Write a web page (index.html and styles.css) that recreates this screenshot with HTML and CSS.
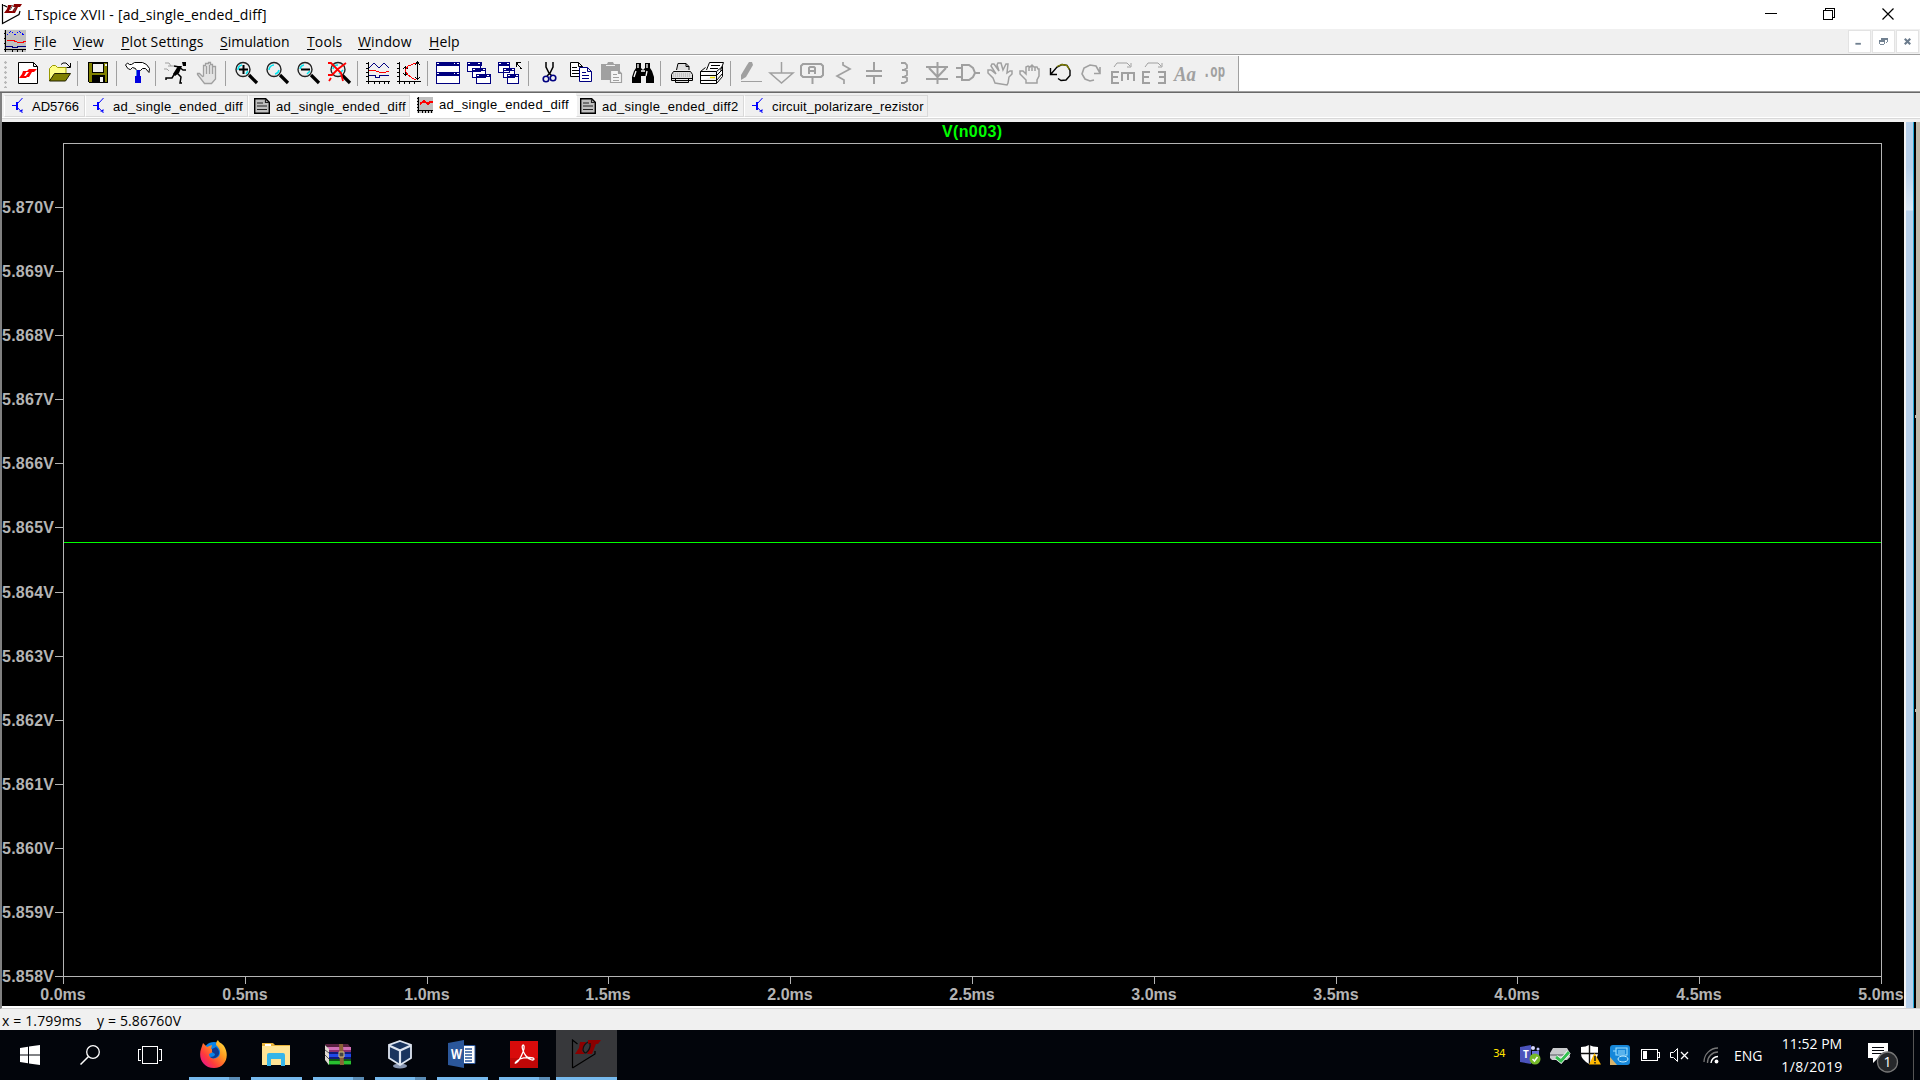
FILE: index.html
```html
<!DOCTYPE html>
<html lang="en">
<head>
<meta charset="utf-8">
<title>LTspice XVII - [ad_single_ended_diff]</title>
<link rel="stylesheet" href="styles.css">
</head>
<body>
<div class="screen">
<header class="titlebar">
  <svg class="app-icon" width="24" height="26" viewBox="0 0 24 26"><path d="M2.500 4V23.500L19 14.500 20 11M2.500 4.500L7 7" fill="none" stroke="#000" stroke-width="1.200"/><path d="M8 5h4l-3 6h3v2H4l3-4zM14 4h8l-2 3h-2l-3 6h-4l4-6h-2z" fill="#8b0000"/><path d="M10 10l3-5M14 11l2-4" stroke="#555"/></svg>
  <span class="title-text">LTspice XVII - [ad_single_ended_diff]</span>
  <svg class="win-controls" width="160" height="29" viewBox="1760 0 160 29" shape-rendering="crispEdges"><path d="M1765 13.500h12M1823.500 10.500h9v9h-9zM1825.500 10v-1.500h9v9h-1.500" fill="none" stroke="#000"/><path d="M1882.500 8.500l11 11M1893.500 8.500l-11 11" stroke="#000" stroke-width="1.200" shape-rendering="auto"/></svg>
</header>
<nav class="menubar">
  <svg class="doc-icon" width="22" height="22" viewBox="0 0 22 22" shape-rendering="crispEdges"><path fill="#c0c0c0" d="M0 0h22v22H0z"/><path d="M1.500 0v22M0 3.500h1M0 8.500h1M0 13.500h1M0 19.500h22M8.500 19v3M13.500 19v3M18.500 19v3" stroke="#000" fill="none"/><path d="M2 16.500h6v1h5v-1h9" stroke="#000080" fill="none"/><path d="M3 5l4-4 4 4 4-4 6 5" stroke="#00f" stroke-dasharray="2 1.500" fill="none"/><path d="M3 11l5-1 5 2 4 1 5-2" stroke="#f00" fill="none"/></svg>
  <span class="m-file"><u>F</u>ile</span><span class="m-view"><u>V</u>iew</span><span class="m-plot"><u>P</u>lot Settings</span><span class="m-sim"><u>S</u>imulation</span><span class="m-tools"><u>T</u>ools</span><span class="m-win"><u>W</u>indow</span><span class="m-help"><u>H</u>elp</span>
  <div class="mdi-controls">
    <svg width="23" height="23" viewBox="0 0 23 23"><path fill="#708090" d="M7 13h6v2H7z"/></svg>
    <svg width="23" height="23" viewBox="0 0 23 23" shape-rendering="crispEdges"><path d="M9 10V8.500h6.500v4H14M7.500 11.500h5v3h-5z" fill="none" stroke="#708090"/><path d="M9 8h7v2H9zM7 10h6v2H7z" fill="#708090"/></svg>
    <svg width="23" height="23" viewBox="0 0 23 23"><path d="M8.500 8.500l6 6M14.500 8.500l-6 6" stroke="#6b7b8c" stroke-width="2.300"/></svg>
  </div>
</nav>
<div class="toolrow">
<div class="toolbar">
  <i class="grip"></i>
  <svg viewBox="0 0 24 24"><path d="M2.500 1.500h15l4 4v17h-19zM17.500 1.500v4h4" fill="#fff" stroke="#000"/><path d="M7 10h4l-3 5h4l-2 2H3l3-4zM13 8h8l-3 3h-2l-3 5h-4l4-5h-3z" fill="#f00"/></svg>
  <svg viewBox="0 0 24 24"><path d="M2.500 20V7.500l3-3h3l2 2h8.500v6" fill="#ff8" stroke="#999900"/><path d="M7.500 12.500h16l-5 7.500h-16z" fill="#808000" stroke="#222200"/><path d="M14 3.500l2-1.500h3l4 4M23.500 2v4.500h-4" fill="none" stroke="#000"/></svg>
  <i class="sep"></i>
  <svg viewBox="0 0 24 24" shape-rendering="crispEdges"><path d="M2.500 1.500h19v20h-18l-1-1z" fill="#808000" stroke="#000"/><path d="M6.500 2.500h11v9h-11z" fill="#f0f0f0" stroke="#000"/><path fill="#000" d="M6 14h13v8H6z"/><path fill="#eee" d="M14 16h3v5h-3zM19 3h2v2h-2z"/></svg>
  <i class="sep"></i>
  <svg viewBox="0 0 24 24"><path d="M.5 4l2-2 2 1.500h2l3-2h8l4 2 3 4-.5 4-3.500-4h-3l-2 2h-4l-1-2-3-1-2 2-2-.5-1-1z" fill="#fff" stroke="#000"/><path d="M11 9h4v6h1v7h-6v-7h1z" fill="#0000e0"/><path d="M11.500 9v6" stroke="#4080e0"/></svg>
  <i class="sep"></i>
  <svg viewBox="0 0 24 24"><path d="M18 1h4v4h-3zM14 5h4l-3 7-4 3-2-2z" fill="#000"/><path d="M10 5l5 1 4 3h3M13 12l4 4-1 6h2M11 12l-3 5H2v2" fill="none" stroke="#000" stroke-width="1.500"/><path d="M1 2h4l2 3h3M0 8h3l2 2M4 5h3" fill="none" stroke="#a0a0a0"/></svg>
  <svg viewBox="0 0 24 24"><path d="M8.500 15V4.500h2V2.500h3V1.500h2v2h2v2h3V18l-4 4.500h-7l-7-9v-1h2l3 3zM11.500 5v8M14.500 4v9M17.500 6v7" fill="#e4e4e4" stroke="#a0a0a0" stroke-width="1.300"/></svg>
  <i class="sep"></i>
  <svg viewBox="0 0 24 24"><path d="M15 14l8 8" stroke="#000" stroke-width="3.200"/><circle cx="9" cy="8.500" r="7" fill="#eee" stroke="#222" stroke-width="1.400"/><path d="M4 9a5 5 0 014-5M12 13l2-3" stroke="#00e5f0" stroke-width="1.500" fill="none"/><path d="M5 8.500h9M9.500 4v9" stroke="#000" stroke-width="2"/></svg>
  <svg viewBox="0 0 24 24"><path d="M15 14l8 8" stroke="#000" stroke-width="3.200"/><circle cx="9" cy="8.500" r="7" fill="#eee" stroke="#222" stroke-width="1.400"/><path d="M4 9a5 5 0 015-5M10 13a5 5 0 004-4" stroke="#00e5f0" stroke-width="1.500" fill="none"/></svg>
  <svg viewBox="0 0 24 24"><path d="M15 14l8 8" stroke="#000" stroke-width="3.200"/><circle cx="9" cy="8.500" r="7" fill="#eee" stroke="#222" stroke-width="1.400"/><path d="M4 8a5 5 0 014-4M11 13l3-3" stroke="#00e5f0" stroke-width="1.500" fill="none"/><path d="M5 8.500h9" stroke="#000" stroke-width="2"/></svg>
  <svg viewBox="0 0 24 24"><path d="M15 14l8 8" stroke="#000" stroke-width="3.200"/><circle cx="11" cy="8.500" r="7" fill="#eee" stroke="#222" stroke-width="1.400"/><path d="M6 8a5 5 0 015-4M12 13l4-4" stroke="#00e5f0" stroke-width="1.500" fill="none"/><path d="M1 2h3l10 10 2 8M19 2l-8 6-6 6H1M4 17l-2 3" stroke="#f00" stroke-width="1.800" fill="none"/></svg>
  <i class="sep"></i>
  <svg viewBox="0 0 24 24" shape-rendering="crispEdges"><path d="M2.500 1v22M0 2.500h3M0 7.500h3M0 11.500h3M0 15.500h3M0 20.500h24M8.500 20v3M13.500 20v3M18.500 20v3M22.500 20v3" stroke="#000"/><path d="M3 7l5-5 5 5 5-5 5 5M3 14.500h6v2h4v-2h10" fill="none" stroke="#000080"/><path d="M3 10l4-1 6 2 4 1 6-2" fill="none" stroke="#f00"/></svg>
  <svg viewBox="0 0 24 24" shape-rendering="crispEdges"><path d="M2.500 1v22M0 2.500h3M0 7.500h3M0 11.500h3M0 15.500h3M0 20.500h24M7.500 20v3M12.500 20v3M17.500 20v3M8.500 6v8M6 8l2.500-2L11 8M6 12l2.500 2 2.500-2M20.500 2v16M18 4l2.500-3L23 4M18 16l2.500 2 2.500-2" stroke="#000" fill="none"/><path d="M19 2l-8 3-3 5 3 4 4 3 4 2" fill="none" stroke="#f00"/></svg>
  <i class="sep"></i>
  <svg viewBox="0 0 24 24" shape-rendering="crispEdges"><path d="M.5 1.500h23v10H.5zM.5 11.500h23v11H.5z" fill="#fff" stroke="#000080"/><path fill="#000080" d="M0 1h24v4H0zM0 11h24v4H0z"/><path fill="#fff" d="M1 2h2v1H1zM18 2h1v1h-1zM21 2h2v1h-2zM1 12h2v1H1zM18 12h1v1h-1zM21 12h2v1h-2z"/></svg>
  <svg viewBox="0 0 24 24" shape-rendering="crispEdges"><g fill="#fff" stroke="#000080"><path d="M.5 1.500h13v9H.5zM5.500 7.500h13v9h-13zM9.500 13.500h14v9h-14z"/></g><path fill="#000080" d="M0 1h15v4H0zM5 7h14v3H5zM9 13h15v3H9z"/><path fill="#fff" d="M1 2h2v1H1zM11 2h2v1h-2zM6 8h2v1H6zM16 8h2v1h-2zM10 14h2v1h-2zM20 14h2v1h-2z"/></svg>
  <svg viewBox="0 0 24 24" shape-rendering="crispEdges"><g fill="#fff" stroke="#000080"><path d="M.5 1.500h11v10H.5zM5.500 7.500h11v9h-11zM9.500 13.500h11v9h-11z"/></g><path fill="#000080" d="M0 1h12v4H0zM5 7h12v3H5zM9 13h12v3H9z"/><path fill="#fff" d="M1 2h2v1H1zM9 2h2v1H9zM6 8h2v1H6zM14 8h2v1h-2zM10 14h2v1h-2zM18 14h2v1h-2z"/><path d="M18.500 6V1.500H23M18.500 2l5 6" fill="none" stroke="#000"/></svg>
  <i class="sep"></i>
  <svg viewBox="0 0 24 24"><path d="M9 1v5l3 6 3 3M16 1v5l-3 6-3 3" fill="none" stroke="#000" stroke-width="1.500"/><circle cx="9" cy="18" r="2.800" fill="none" stroke="#000080" stroke-width="1.600"/><circle cx="16" cy="17" r="2.800" fill="none" stroke="#000080" stroke-width="1.600"/></svg>
  <svg viewBox="0 0 24 24"><path d="M2.500 1.500h8l4 4v10h-12zM10.500 1.500v4h4" fill="#fff" stroke="#000"/><path d="M4 6.500h5M4 9.500h7M4 12.500h7" stroke="#000"/><path d="M11.500 6.500h8l4 4v10h-12zM19.500 6.500v4h4" fill="#fff" stroke="#000080"/><path d="M14 11.500h4M14 14.500h7M14 17.500h7" stroke="#000080"/></svg>
  <svg viewBox="0 0 24 24"><path d="M2 3h6l1-2h5l1 2h6v16H2z" fill="#a0a0a0"/><path d="M7 4.500h9" stroke="#eee"/><path d="M11.500 9.500h8l3 3v9h-11zM19.500 9.500v3h3M14 13.500h4M14 16.500h6M14 19.500h6" fill="#f5f5f5" stroke="#a0a0a0" stroke-width="1.200"/></svg>
  <svg class="find" viewBox="0 0 24 24"><path d="M5 2h5v5l2 2 2-2V2h5v5l2 3 2 6v6h-8v-7h-5v7H1v-6l2-6 2-3z" fill="#000"/><path d="M7 3v4M5 10l-2 6M16 3v4M16 10l-1 5M10 10h4" stroke="#fff" stroke-width="1.300"/></svg>
  <i class="sep"></i>
  <svg viewBox="0 0 24 24"><path d="M7.500 9L9 2.500h8l3 3V9M17 2.500v3h3" fill="#ddd" stroke="#000"/><path d="M4.500 10.500h17l2 3v6h-21v-6zM2.500 17.500h21M6.500 17.500v4h13v-4" fill="#ddd" stroke="#000"/><path d="M4 13h18M4 15h18" stroke="#aaa" stroke-dasharray="1 1"/></svg>
  <svg viewBox="0 0 24 24"><path d="M6.500 9l3-7.500h14l-3 8M.5 10.500h16l6-5v10l-6 7H.5zM.5 10.500l5-4M16.500 10.500v12M.5 14.500h16l6-6M.5 19.500h16l6-7" fill="#fff" stroke="#000"/><path d="M11 4.500h9M10 7.500h8" stroke="#000"/><path d="M10 16.500h5" stroke="#f0e000" stroke-width="1.500"/></svg>
  <i class="sep"></i>
  <svg class="off" viewBox="0 0 24 24"><path fill="#a0a0a0" stroke="none" d="M10 1h3l1 3-7 12-5 3V14L8 4z"/><path d="M2 20.500h21"/></svg>
  <svg class="off" viewBox="0 0 24 24"><path d="M11.500 1v11M0 12h23L11.500 22z" stroke-width="1.500"/></svg>
  <svg class="off" viewBox="0 0 24 24"><path d="M2 3h18l2 2v9l-2 2H2l-2-2V5zM11.500 16v7M8 13V7l1-1h4l1 1v6M8 10h6" stroke-width="2"/></svg>
  <svg class="off" viewBox="0 0 24 24"><path d="M11 1v3l7 4-13 7 7 4v4" stroke-width="1.700"/></svg>
  <svg class="off" viewBox="0 0 24 24"><path d="M11 1v8M11 15v8M3 10h16M3 15h16" stroke-width="2"/></svg>
  <svg class="off" viewBox="0 0 24 24"><path d="M7 2h4l2 2v3l-3 2H8M10 9l3 1v4l-3 2H8M10 16l3 1v3l-3 2H7" stroke-width="1.800"/></svg>
  <svg class="off" viewBox="0 0 24 24"><path d="M12.500 1v22M1 6h22M4 7l8.500 9L21 7M1 18h22" stroke-width="2"/></svg>
  <svg class="off" viewBox="0 0 24 24"><path d="M0 7h6M0 16h6M5 4h8l4 3 2 5-2 4-4 3H5M6 4v15M19 12h5" stroke-width="2"/></svg>
  <svg class="off" viewBox="0 0 24 24"><path d="M8 22l-2-5-5-5V9h3l5 4-5-8 1-2h2l5 7-2-6 1-2h3l2 7 3-6h2l-1 9 3-2h2v3l-3 3-1 6-1 2z" stroke-width="1.500"/></svg>
  <svg class="off" viewBox="0 0 24 24"><path d="M8 22v-3l-6-6v-3h3l3 3V6l2-1 2 1 2-2 2 2h3l1 2h1v7l-2 4v3zM11 5v5M14 5v5M17 6v4" stroke-width="1.500"/></svg>
  <svg viewBox="0 0 24 24"><path d="M1.500 7v6.500H8M2 13l6-7 5-2.500 5 1 3 5v5l-4 4.500-5 .5-3-2" fill="none" stroke="#000" stroke-width="1.400"/><path d="M8 5.500l5-2 5 1 2.500 4" fill="none" stroke="#808000" stroke-width="1.300"/></svg>
  <svg class="off" viewBox="0 0 24 24"><path d="M20 6v6.500h-6M20 12l-4-7-6-1-6 3-2 6 3 5 5 2 4-1" stroke-width="1.600"/></svg>
  <svg class="off" viewBox="0 0 24 24"><path d="M8 11H1v11h7M1 16h6M11 20v-8h12v8M17 12v7" stroke-width="2"/><path d="M3 6l3-4h10l3 3M20 2v4h-4"/></svg>
  <svg class="off" viewBox="0 0 24 24"><path d="M8 11H1v11h7M1 16h6M16 11h7v11h-7M23 16h-6" stroke-width="2"/><path d="M3 6l3-4h10l3 3M20 2v4h-4"/></svg>
  <svg viewBox="0 0 24 24"><text x="1" y="20" class="t-aa" textLength="22" lengthAdjust="spacingAndGlyphs">Aa</text></svg>
  <svg viewBox="0 0 24 24"><text x="-1" y="16" class="t-op" textLength="22" lengthAdjust="spacingAndGlyphs">.op</text></svg>
</div>
</div>
<div class="tabs">
  <div class="tab t1"><svg viewBox="0 0 16 16"><use href="#bjt"/></svg><span class="plain">AD5766</span></div>
  <div class="tab t2"><svg viewBox="0 0 16 16"><use href="#bjt"/></svg><span>ad_single_ended_diff</span></div>
  <div class="tab t3"><svg viewBox="0 0 16 16"><use href="#doc"/></svg><span>ad_single_ended_diff</span></div>
  <div class="tab t4 active"><svg viewBox="0 0 16 16" shape-rendering="crispEdges"><path fill="#c0c0c0" d="M0 0h16v16H0z"/><path d="M1.500 0v16M0 1.500h2M0 4.500h2M0 7.500h2M0 10.500h2M0 13.500h16M5.500 13v3M8.500 13v3M11.500 13v3M14.500 13v3" stroke="#000"/><path d="M3 7l4-3 4 3 2-2h3" fill="none" stroke="#f00" stroke-width="2"/></svg><span>ad_single_ended_diff</span></div>
  <div class="tab t5"><svg viewBox="0 0 16 16"><use href="#doc"/></svg><span>ad_single_ended_diff2</span></div>
  <div class="tab t6"><svg viewBox="0 0 16 16"><use href="#bjt"/></svg><span>circuit_polarizare_rezistor</span></div>
  <svg class="defs" width="0" height="0"><defs>
    <g id="bjt" fill="none" stroke="#00f"><path d="M0 7.500h4M10.500 0L5 6M5 9l5.500 6"/><path d="M5 4v8" stroke-width="2"/><path d="M7 13.500h3.500V11z" fill="#00f" stroke="none"/></g>
    <g id="doc"><path d="M.7.700h11l3.600 3.600v11H.7z" fill="#c0c0c0" stroke="#000" stroke-width="1.400"/><path d="M11.500 1v3.500H15M3 5h6M3 8h10M3 11.500h10" stroke="#222" stroke-width="1.200" fill="none"/></g>
  </defs></svg>
</div>
<main class="workspace">
  <svg class="plot" id="plot" width="1902" height="884" viewBox="2 122 1902 884">
    <g shape-rendering="crispEdges" fill="none" stroke="#b4b4b4">
      <path d="M63.500 984V143.500H1881.500V984M55 976.500H1882"/>
      <path d="M55 207.500h8M55 271.500h8M55 335.500h8M55 399.500h8M55 463.500h8M55 527.500h8M55 592.500h8M55 656.500h8M55 720.500h8M55 784.500h8M55 848.500h8M55 912.500h8"/>
      <path d="M245.500 977v7M427.500 977v7M608.500 977v7M790.500 977v7M972.500 977v7M1154.500 977v7M1336.500 977v7M1517.500 977v7M1699.500 977v7"/>
      <path d="M64 542.500H1881" stroke="#0f0"/>
    </g>
    <text class="trace" x="972" y="137" text-anchor="middle" textLength="60">V(n003)</text>
    <g class="axis">
      <text x="2" y="213" textLength="52">5.870V</text><text x="2" y="277" textLength="52">5.869V</text><text x="2" y="341" textLength="52">5.868V</text><text x="2" y="405" textLength="52">5.867V</text><text x="2" y="469" textLength="52">5.866V</text><text x="2" y="533" textLength="52">5.865V</text><text x="2" y="598" textLength="52">5.864V</text><text x="2" y="662" textLength="52">5.863V</text><text x="2" y="726" textLength="52">5.862V</text><text x="2" y="790" textLength="52">5.861V</text><text x="2" y="854" textLength="52">5.860V</text><text x="2" y="918" textLength="52">5.859V</text><text x="2" y="982" textLength="52">5.858V</text>
    </g>
    <g class="axis" text-anchor="middle">
      <text x="63" y="1000">0.0ms</text><text x="245" y="1000">0.5ms</text><text x="427" y="1000">1.0ms</text><text x="608" y="1000">1.5ms</text><text x="790" y="1000">2.0ms</text><text x="972" y="1000">2.5ms</text><text x="1154" y="1000">3.0ms</text><text x="1336" y="1000">3.5ms</text><text x="1517" y="1000">4.0ms</text><text x="1699" y="1000">4.5ms</text><text x="1881" y="1000">5.0ms</text>
    </g>
  </svg>
  <div class="edge-blue"></div>
  <div class="edge-desk"><i></i><i></i></div>
</main>
<div class="statusbar"><span class="s-x">x = 1.799ms</span><span class="s-y">y = 5.86760V</span></div>
<footer class="taskbar">
  <div class="sys"><svg width="20" height="20" viewBox="0 0 20 20"><path fill="#fff" d="M0 3l8-1.200V9.500H0zM9 1.600L20 0v9.500H9zM0 10.500h8v7.700L0 17zM9 10.500h11V20L9 18.400z"/></svg></div>
  <div class="sys"><svg width="20" height="20" viewBox="0 0 20 20"><circle cx="13" cy="7" r="6.300" fill="none" stroke="#fff" stroke-width="1.300"/><path d="M8.500 11.500L.5 19.500" stroke="#fff" stroke-width="1.500"/></svg></div>
  <div class="sys"><svg width="24" height="20" viewBox="0 0 24 20" shape-rendering="crispEdges"><path d="M4.500 1.500h15v17h-15zM3 4.500H.5v11H3M21 4.500h2.500v11H21" fill="none" stroke="#fff"/></svg></div>
  <div class="app more"><svg width="28" height="28" viewBox="0 0 28 28"><defs><linearGradient id="fox" x1="1" y1="0" x2="0.100" y2="0.900"><stop offset="0" stop-color="#fff04a"/><stop offset=".4" stop-color="#ff9a1f"/><stop offset=".75" stop-color="#ff3b3b"/><stop offset="1" stop-color="#e8168a"/></linearGradient></defs><circle cx="14" cy="13" r="11" fill="#0a84e8"/><path d="M3 3l4 4 5-2-1 4 3 1-1 2-4 2c0 5 7 6 10 2 3-5-1-9-3-11 0-3 1-4 2-5 1 3 4 3 6 6 6 9 2 22-10 22C3 28-2 18 1 9z" fill="url(#fox)"/><path d="M12 9l4-2q5 4 2 9-4 4-8 1 5 0 5-3l-3-2z" fill="#103a90"/></svg></div>
  <div class="app"><svg width="28" height="26" viewBox="0 0 28 26"><path fill="#e8b339" d="M0 2h11l2 2h15v20H0z"/><path fill="#ffe495" d="M0 5h28v19H0z"/><path fill="#fff" d="M3 3h6v2H3z"/><path fill="#35b5e9" d="M5 14q0-2 2-2h14q2 0 2 2v11h-4v-7H9v7H5z"/></svg></div>
  <div class="app more"><svg width="28" height="26" viewBox="0 0 28 26"><path fill="#582040" d="M1 3h23l3 4H4z"/><path fill="#d070b8" d="M3 6h24v4H4z"/><path fill="#8a3070" d="M4 9h23v2H4z"/><path fill="#101c78" d="M3 11h24v7H4z"/><path fill="#2048e8" d="M4 13h23v3H4z"/><path fill="#0f5518" d="M3 18h24v6H4z"/><path fill="#28c030" d="M4 20h23v3H4z"/><path fill="#ded8d0" d="M1 4l4 4v16l-4-5z"/><path d="M1 9l4 3M1 14l4 4" stroke="#555"/><path fill="#8b6238" d="M15 3h4l1 21h-4z"/><path d="M15 11h5v5h-5z" fill="#444" stroke="#d8c080"/></svg></div>
  <div class="app more"><svg width="26" height="30" viewBox="0 0 26 30"><ellipse cx="13" cy="27" rx="7" ry="2.500" fill="#8795b0"/><path d="M13 2l11 4v13l-11 7L2 19V6z" fill="#1a355e" stroke="#dde5f0" stroke-width="1.800"/><path d="M2 6.500l11 5 11-5M13 12v14" fill="none" stroke="#dde5f0" stroke-width="2.200"/></svg></div>
  <div class="app"><svg width="28" height="28" viewBox="0 0 28 28"><path d="M14 5.500h13v18H14z" fill="#fff" stroke="#2b579a"/><path d="M17 9h7M17 12h7M17 15h7M17 18h7M17 21h7" stroke="#2b579a" stroke-width="1.300"/><path d="M0 3l16-3v28L0 25z" fill="#2b579a"/><text x="3" y="19" class="t-w" textLength="11" lengthAdjust="spacingAndGlyphs">W</text></svg></div>
  <div class="app more"><svg width="28" height="28" viewBox="0 0 28 28"><path fill="#d80b0b" d="M0 1h28v27H0z"/><path fill="#a80404" d="M0 18h28v10H0z" opacity=".5"/><path d="M13 5c-2 1 0 7 3 11s8 5 8 3-10-2-14 0-6 5-4 4 5-6 7-11 1-7 0-7z" fill="none" stroke="#fff" stroke-width="1.300"/></svg></div>
  <div class="app current"><svg width="30" height="30" viewBox="0 0 30 30"><path d="M1.500 29V1l5 4M1.500 29L24 15v-3" fill="none" stroke="#000" stroke-width="1.200"/><path fill="#8b0000" d="M9 3h6l-4 9 3 3H4l4-6zM17 1h13l-3 4h-2l-4 10h-5l4-10h-3z"/><path d="M17 3q-5 3-5 8 1 3 3 3M19 4q1 6-4 10" fill="none" stroke="#111" stroke-width="1.200"/></svg></div>
  <div class="tray">
    <span class="n34">34</span>
    <svg class="i-teams" width="20" height="20" viewBox="0 0 20 20"><path fill="#4b53bc" d="M0 2l11-2v19L0 17z"/><path fill="#6870d8" d="M12 6h7v7l-5 5h-2z"/><circle cx="13" cy="3" r="2" fill="#d8daff"/><circle cx="18" cy="4" r="1.500" fill="#c0c4ff"/><text x="3" y="13" class="t-t">T</text><circle cx="15" cy="14" r="5.500" fill="#76b82a"/><path d="M12.500 14l2 2 3-4" fill="none" stroke="#fff" stroke-width="1.500"/></svg>
    <svg class="i-drive" width="20" height="18" viewBox="0 0 20 18"><path fill="#c8cacc" d="M3 2h14l3 5v4l-3 3H2l-2-2V7z"/><path fill="#8c9094" d="M0 8h20v2H0z"/><path d="M6 11l5 4 8-9" fill="none" stroke="#fff" stroke-width="4.500"/><path d="M6 11l5 4 8-9" fill="none" stroke="#35c050" stroke-width="3"/></svg>
    <svg class="i-shield" width="20" height="20" viewBox="0 0 20 20"><path fill="#fff" d="M0 2q5 0 8-2 4 2 9 2v7q-1 6-9 10Q0 14 0 9z"/><path d="M8.500 0v19M0 8.500h17" stroke="#111" stroke-width="1.400"/><path fill="#ffb900" d="M13.500 8L20 19.500H8z"/><path d="M14 11v5M14 17v1.500" stroke="#222" stroke-width="1.600"/></svg>
    <svg class="i-intel" width="20" height="20" viewBox="0 0 20 20"><rect width="20" height="20" rx="3" fill="#1687d9"/><path d="M0 12l7 8H0z" fill="#d8b36a"/><path d="M6 3h11v7H6zM3 6h3M8 6h7M8 8h7" fill="none" stroke="#9de0ff" stroke-width="1.100"/><ellipse cx="13" cy="14" rx="5" ry="3" fill="none" stroke="#c5efff"/></svg>
    <svg class="i-bat" width="19" height="12" viewBox="0 0 19 12" shape-rendering="crispEdges"><path d="M.5.500h16v11H.5zM17 3.500h1.500v5H17" fill="none" stroke="#fff"/><path fill="#fff" d="M2 2h4v8H2z"/></svg>
    <svg class="i-snd" width="19" height="14" viewBox="0 0 19 14"><path d="M.5 4.500h3l4-4v13l-4-4h-3z" fill="none" stroke="#fff"/><path d="M11 4l7 7M18 4l-7 7" stroke="#fff" stroke-width="1.300"/></svg>
    <svg class="i-wifi" width="17" height="17" viewBox="0 0 17 17"><g fill="none" stroke="#777" stroke-width="1.300"><path d="M1 15A14 14 0 0115 1"/><path d="M4.500 16A10.500 10.500 0 0115 5"/></g><path d="M8 16a7 7 0 017-6.500" fill="none" stroke="#fff" stroke-width="1.400"/><circle cx="13.500" cy="14.500" r="1.900" fill="#fff"/></svg>
    <span class="lang">ENG</span>
    <div class="clock"><span>11:52 PM</span><span>1/8/2019</span></div>
    <svg class="i-note" width="31" height="32" viewBox="0 0 31 32"><path fill="#fff" d="M0 2h20v15H10l-5 5v-5H0z"/><path d="M4 6.500h12M4 9.500h12M4 12.500h12" stroke="#05070d"/><circle cx="19.500" cy="21" r="10" fill="#26282b" stroke="#777" stroke-width="1.300"/><text x="19.500" y="26" class="t-1" text-anchor="middle">1</text></svg>
    <i class="peek"></i>
  </div>
</footer>
</div>
</body>
</html>
```
FILE: styles.css
```css
* { box-sizing: border-box; }
body { margin: 0; background: #000; overflow: hidden; font-family: "Open Sans", "Noto Sans", sans-serif; color: #000; }
svg { display: block; flex: none; }
.screen { width: 1920px; height: 1080px; display: flex; flex-direction: column; }
.titlebar { height: 29px; background: #fff; display: flex; flex: none; }
.title-text { margin-left: 3px; font-size: 14px; line-height: 29px; letter-spacing: .19px; white-space: nowrap; }
.win-controls { margin-left: auto; }

.menubar { height: 26px; flex: none; background: #f0f0f0; border-bottom: 1px solid #a0a0a0; display: flex; font-size: 14px; letter-spacing: .12px; line-height: 25px; white-space: nowrap; }
.menubar u { text-underline-offset: 2px; text-decoration-thickness: 1px; text-decoration-skip-ink: none; }
.doc-icon { margin: 1px 8px 0 4px; }
.m-file { width: 39px; } .m-view { width: 48px; } .m-plot { width: 99px; } .m-sim { width: 87px; letter-spacing: 0; }
.m-tools { width: 51px; } .m-win { width: 71px; } .m-help { width: 40px; }
.mdi-controls { margin-left: auto; display: flex; gap: 1px; padding: 1px 1px 0 0; }
.mdi-controls svg { background: #fff; border: 1px solid #e3e3e3; }

.toolrow { height: 38px; flex: none; background: #fff; border-top: 1px solid #fff; border-bottom: 1px solid #696969; box-shadow: inset 0 -1px #a0a0a0; }
.toolbar { width: 1239px; height: 35px; background: #f0f0f0; border-right: 1px solid #a0a0a0; display: flex; align-items: center; }
.toolbar svg { width: 24px; height: 24px; margin: 0 4px 1px 3px; overflow: visible; }
.toolbar .find { margin-left: 4px; margin-right: 3px; }
.grip { width: 13px; height: 28px; flex: none; background: radial-gradient(circle, #b8b8b8 1px, transparent 1.500px) 3px 0 / 5px 5px repeat-y; }
.sep { width: 8px; height: 25px; flex: none; background: linear-gradient(#a0a0a0, #a0a0a0) 2px 0 / 1px 100% no-repeat; }
.off { fill: none; stroke: #a0a0a0; }
.t-aa { font: italic bold 20px "Liberation Serif", serif; fill: #a0a0a0; }
.t-op { font: bold 18px "DejaVu Sans Mono", monospace; fill: #a0a0a0; }

.tabs { height: 29px; flex: none; background: #f0f0f0; display: flex; align-items: flex-start; padding: 2px 0 0 2px; border-left: 2px solid #808080; box-shadow: inset 0 -3px #f0f0f0, inset 0 -4px #d9d9d9, inset 0 -5px #fff; }
.tab { height: 22px; border: 1px solid #d9d9d9; border-left-color: #fff; display: flex; align-items: center; font: 13px "Liberation Sans", Arial, sans-serif; letter-spacing: .33px; white-space: nowrap; }
.tab svg { width: 16px; height: 16px; }
.plain { letter-spacing: 0; }
.t1 { width: 81px; padding-left: 7px; } .t1 span { margin-left: 4px; }
.t2 { width: 163px; padding-left: 7px; } .t2 span { margin-left: 4px; }
.t3 { width: 162px; padding-left: 5px; } .t3 span { margin-left: 6px; }
.t4 { width: 166px; padding-left: 6px; } .t4 span { margin-left: 6px; }
.t5 { width: 168px; padding-left: 3px; letter-spacing: .28px; } .t5 span { margin-left: 6px; }
.t6 { width: 184px; padding-left: 7px; letter-spacing: .13px; } .t6 span { margin-left: 4px; }
.active { background: #fff; border-color: #fff; height: 24px; margin-top: -2px; padding-bottom: 1px; }
.defs { width: 0; height: 0; }

.workspace { height: 887px; flex: none; background: #fff; display: flex; border-left: 2px solid #808080; border-bottom: 1px solid #d4d4d4; }
.plot { background: #000; }
.axis { font: bold 16px "Liberation Sans", Arial, sans-serif; fill: #b4b4b4; }
.trace { font: bold 16px "Liberation Sans", Arial, sans-serif; fill: #0f0; }
.edge-blue { width: 10px; border-left: 2px solid #f4f4f4; border-right: 1px solid #25a9d8; background: linear-gradient(#b8d0ea, #b8d0ea 45px, #dce8f5 88px, #b8d0ea 89px); }
.edge-desk { flex: 1; border-left: 2px solid #000; background: #c0b8a9; }
.edge-desk i { display: block; width: 2px; height: 3px; margin-left: -1px; background: #c0b8a9; }
.edge-desk i:first-child { margin-top: 293px; margin-bottom: 291px; }

.statusbar { height: 21px; flex: none; background: #f0f0f0; display: flex; font-size: 14px; letter-spacing: .15px; line-height: 23px; white-space: nowrap; padding-left: 2px; }
.s-x { width: 95px; }

.taskbar { height: 50px; flex: none; background: #02050b; display: flex; color: #fff; }
.sys { width: 60px; display: flex; align-items: center; justify-content: center; }
.taskbar .sys:nth-child(3) { margin-right: 4px; }
.app { width: 61px; margin-right: 1px; padding: 0 2px 2px 0; display: flex; align-items: center; justify-content: center; background: linear-gradient(#76b9ed, #76b9ed) 5px 100% / 51px 3px no-repeat; }
.more { background: linear-gradient(90deg, #76b9ed 40px, #5a8cb5 40px) 5px 100% / 51px 3px no-repeat; }
.current { background: linear-gradient(#76b9ed, #76b9ed) 0 100% / 100% 3px no-repeat #37383b; }
.tray { margin-left: auto; width: 427px; display: flex; align-items: center; }
.tray svg { overflow: visible; }
.n34 { width: 27px; font: 10.500px "DejaVu Sans", sans-serif; color: #ffe000; letter-spacing: -.7px; padding-bottom: 4px; }
.i-teams { margin-right: 10px; } .i-drive { margin-right: 11px; } .i-shield { margin-right: 9px; } .i-intel { margin-right: 11px; }
.i-bat { margin-right: 10px; } .i-snd { margin-right: 14px; } .i-wifi { margin-right: 14px; }
.lang { width: 48px; font-size: 14px; }
.clock { width: 60px; font-size: 14px; line-height: 23px; display: flex; flex-direction: column; align-items: center; white-space: nowrap; letter-spacing: 0; padding-bottom: 1px; }
.clock span:last-child { letter-spacing: .4px; }
.i-note { margin: 3px 0 0 26px; }
.peek { width: 1px; height: 50px; background: #555; margin-left: 14px; }
.t-w { font: bold 14px "Open Sans", sans-serif; fill: #fff; }
.t-t { font: bold 10px "Open Sans", sans-serif; fill: #fff; }
.t-1 { font: 14px "Open Sans", sans-serif; fill: #fff; }
```
